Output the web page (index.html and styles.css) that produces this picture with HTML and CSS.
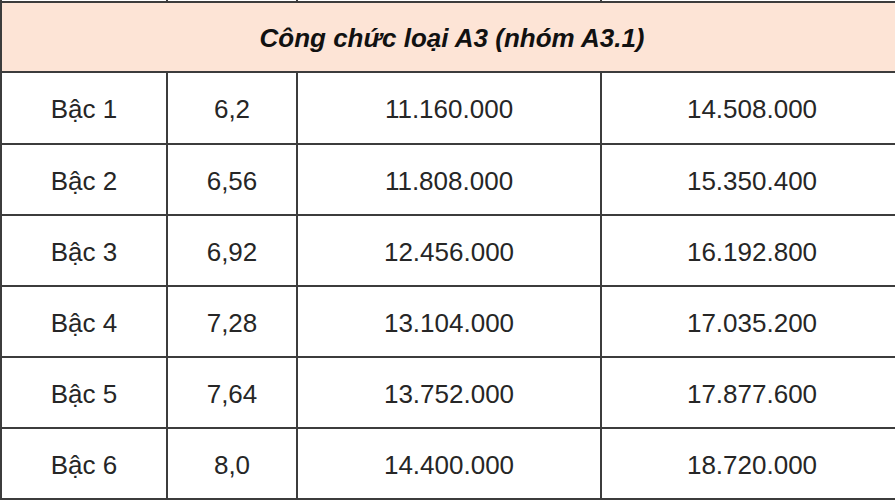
FILE: index.html
```html
<!DOCTYPE html>
<html lang="vi">
<head>
<meta charset="utf-8">
<title>Công chức loại A3</title>
<link rel="stylesheet" href="styles.css">
</head>
<body>
<table class="salary">
  <colgroup>
    <col class="c1"><col class="c2"><col class="c3"><col class="c4">
  </colgroup>
  <tr class="prev"><td></td><td></td><td></td><td></td></tr>
  <tr class="head"><td colspan="4">Công chức loại A3 (nhóm A3.1)</td></tr>
  <tr class="first"><td>Bậc 1</td><td>6,2</td><td>11.160.000</td><td>14.508.000</td></tr>
  <tr><td>Bậc 2</td><td>6,56</td><td>11.808.000</td><td>15.350.400</td></tr>
  <tr><td>Bậc 3</td><td>6,92</td><td>12.456.000</td><td>16.192.800</td></tr>
  <tr><td>Bậc 4</td><td>7,28</td><td>13.104.000</td><td>17.035.200</td></tr>
  <tr><td>Bậc 5</td><td>7,64</td><td>13.752.000</td><td>17.877.600</td></tr>
  <tr><td>Bậc 6</td><td>8,0</td><td>14.400.000</td><td>18.720.000</td></tr>
</table>
</body>
</html>
```
FILE: styles.css
```css
html, body {
  margin: 0;
  padding: 0;
  background: #ffffff;
  overflow: hidden;
}
.salary {
  border-collapse: collapse;
  table-layout: fixed;
  width: 902px;
  margin: -2px 0 0 0;
  font-family: "Liberation Sans", Arial, sans-serif;
  font-size: 26px;
  color: #262626;
}
.c1 { width: 166px; }
.c2 { width: 130px; }
.c3 { width: 304px; }
.c4 { width: 302px; }
.salary td {
  border: 2px solid #3c3c3c;
  text-align: center;
  vertical-align: middle;
  padding: 3px 0 0 0;
  height: 66px;
}
.salary .first td {
  height: 67px;
}
.salary .prev td {
  height: 3px;
  padding: 0;
  border-top: none;
}
.salary .head td {
  background: #fde4d6;
  font-weight: bold;
  font-style: italic;
  padding: 2px 0 0 0;
  height: 66px;
  color: #111111;
}
```
